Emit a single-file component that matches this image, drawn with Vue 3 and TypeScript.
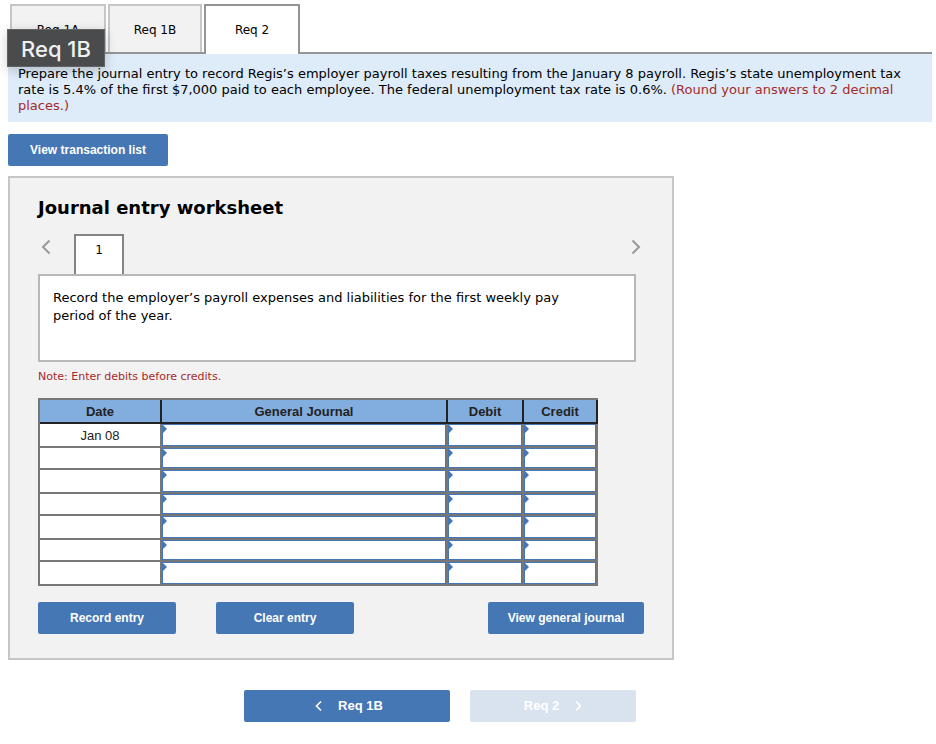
<script setup lang="ts">
import { ref } from 'vue'

interface EntryRow {
  date: string
  account: string
  debit: string
  credit: string
}

const tabs: string[] = ['Req 1A', 'Req 1B', 'Req 2']
const activeTab = ref('Req 2')

const emptyRow = (date = ''): EntryRow => ({ date, account: '', debit: '', credit: '' })
const makeRows = (): EntryRow[] => Array.from({ length: 7 }, (_, i) => emptyRow(i === 0 ? 'Jan 08' : ''))
const rows = ref<EntryRow[]>(makeRows())

function clearEntry(): void {
  rows.value = makeRows()
}
</script>

<template>
  <main class="page">
    <nav class="tabs">
      <button
        v-for="tab in tabs"
        :key="tab"
        type="button"
        class="tab"
        :class="{ active: tab === activeTab }"
        @click="activeTab = tab"
      >{{ tab }}</button>
      <div class="tooltip" role="tooltip">Req 1B</div>
    </nav>

    <p class="instructions">
      Prepare the journal entry to record Regis’s employer payroll taxes resulting from the January 8 payroll. Regis’s state unemployment tax rate is 5.4% of the first $7,000 paid to each employee. The federal unemployment tax rate is 0.6%.
      <span class="warn">(Round your answers to 2 decimal places.)</span>
    </p>

    <button type="button" class="btn list-btn">View transaction list</button>

    <section class="worksheet">
      <h1>Journal entry worksheet</h1>

      <div class="pager">
        <button type="button" class="arrow" aria-label="Previous entry">
          <svg width="10" height="16" viewBox="0 0 10 16"><path d="M8.5 1.5L2 8l6.5 6.5" /></svg>
        </button>
        <button type="button" class="entry-tab">1</button>
        <button type="button" class="arrow next" aria-label="Next entry">
          <svg width="10" height="16" viewBox="0 0 10 16"><path d="M1.5 1.5L8 8l-6.5 6.5" /></svg>
        </button>
      </div>

      <div class="description">
        <p>Record the employer’s payroll expenses and liabilities for the first weekly pay period of the year.</p>
      </div>

      <p class="note">Note: Enter debits before credits.</p>

      <table class="journal">
        <colgroup>
          <col class="c-date" />
          <col />
          <col class="c-debit" />
          <col class="c-credit" />
        </colgroup>
        <thead>
          <tr>
            <th scope="col">Date</th>
            <th scope="col">General Journal</th>
            <th scope="col">Debit</th>
            <th scope="col">Credit</th>
          </tr>
        </thead>
        <tbody>
          <tr v-for="(row, i) in rows" :key="i">
            <td>{{ row.date }}</td>
            <td class="field"><input v-model="row.account" type="text" :aria-label="`Account, line ${i + 1}`" /></td>
            <td class="field"><input v-model="row.debit" type="text" :aria-label="`Debit, line ${i + 1}`" /></td>
            <td class="field"><input v-model="row.credit" type="text" :aria-label="`Credit, line ${i + 1}`" /></td>
          </tr>
        </tbody>
      </table>

      <div class="actions">
        <button type="button" class="btn action">Record entry</button>
        <button type="button" class="btn action" @click="clearEntry">Clear entry</button>
        <button type="button" class="btn general">View general journal</button>
      </div>
    </section>

    <div class="steps">
      <button type="button" class="btn step prev">
        <svg width="7" height="12" viewBox="0 0 7 12"><path d="M6 1.5L1.5 6L6 10.5" /></svg>
        <span>Req 1B</span>
      </button>
      <button type="button" class="btn step following" disabled>
        <span>Req 2</span>
        <svg width="7" height="12" viewBox="0 0 7 12"><path d="M1 1.5L5.5 6L1 10.5" /></svg>
      </button>
    </div>
  </main>
</template>

<style>
body {
  margin: 0;
  background: #fff;
}
</style>

<style scoped>
* {
  box-sizing: border-box;
}

.page {
  padding: 4px 4px 22px 8px;
  font: 13px/16px Verdana, 'DejaVu Sans', sans-serif;
  color: #000;
}

button {
  margin: 0;
  padding: 0;
  font: inherit;
  color: inherit;
  cursor: pointer;
}

svg {
  display: block;
  fill: none;
  stroke: currentColor;
}

.tabs {
  position: relative;
  display: flex;
  gap: 2px;
  height: 50px;
  padding-left: 2px;
  border-bottom: 2px solid #949494;
}

.tab {
  width: 96px;
  height: 48px;
  padding-top: 2px;
  border: 2px solid #c6c6c6;
  border-bottom: 0;
  background: #f2f2f2;
  font-size: 12px;
}

.tab:nth-child(2) {
  width: 94px;
}

.tab.active {
  height: 50px;
  padding-top: 0;
  border-color: #949494;
  background: #fff;
}

.tooltip {
  position: absolute;
  top: 25px;
  left: -1px;
  width: 98px;
  height: 38px;
  border: 1px solid #626364;
  background: #4a4b4d;
  box-shadow: 0 3px 12px rgba(0, 0, 0, 0.2);
  color: #f0f0f0;
  font: 500 22px/38px Inter, sans-serif;
  text-align: center;
}

.instructions {
  margin: 0;
  padding: 12px 10px 8px;
  background: #deebf8;
}

.warn,
.note {
  color: #a52a2a;
}

.btn {
  height: 32px;
  border: 0;
  border-radius: 2px;
  background: #4677b5;
  color: #fff;
  font: bold 12px/16px Arial, 'Liberation Sans', sans-serif;
}

.list-btn {
  display: block;
  width: 160px;
  margin: 12px 0 10px;
}

.worksheet {
  max-width: 666px;
  padding: 18px 28px 24px;
  border: 2px solid #c6c6c6;
  background: #f2f2f2;
}

h1 {
  margin: 0;
  font-size: 18px;
  line-height: 24px;
}

.pager {
  display: flex;
  align-items: flex-start;
  margin-top: 14px;
  padding: 0 3px;
}

.arrow {
  margin-top: 5px;
  border: 0;
  background: none;
  color: #999;
}

.arrow svg {
  stroke-width: 2;
}

.next {
  margin-left: auto;
}

.entry-tab {
  width: 50px;
  height: 40px;
  margin-left: 23px;
  padding-bottom: 10px;
  border: 2px solid #848484;
  border-bottom: 0;
  background: #fff;
  font-size: 12px;
}

.description {
  min-height: 88px;
  margin-right: 8px;
  padding: 13px;
  border: 2px solid #b8b8b8;
  background: #fff;
  line-height: 18px;
}

.description p {
  max-width: 520px;
  margin: 0;
}

.note {
  margin: 7px 0 13px;
  font-size: 11px;
}

.journal {
  width: 100%;
  max-width: 560px;
  table-layout: fixed;
  border: solid #777;
  border-width: 2px 0 0 2px;
  border-collapse: separate;
  border-spacing: 0;
  font: 13px/16px Arial, 'Liberation Sans', sans-serif;
  color: #222;
}

.c-date {
  width: 122px;
}

.c-debit {
  width: 76px;
}

.c-credit {
  width: 74px;
}

th,
td {
  height: 24px;
  padding: 2px 0 0;
  border: solid #777;
  border-width: 0 2px 2px 0;
  background: #fff;
  text-align: center;
}

th {
  border-color: #222;
  background: #82addf;
}

tbody tr:nth-child(even) td {
  height: 22px;
}

.field {
  position: relative;
}

.field input {
  position: absolute;
  inset: 0;
  width: 100%;
  height: 100%;
  padding: 0 8px;
  border: 1px solid #4677b5;
  border-radius: 0;
  background: transparent;
  font: inherit;
}

.field::before {
  content: '';
  position: absolute;
  top: 1px;
  left: 1px;
  border: solid transparent;
  border-width: 4px 0 4px 4px;
  border-left-color: #4677b5;
}

.actions {
  display: flex;
  gap: 40px;
  margin-top: 16px;
}

.action {
  width: 138px;
}

.general {
  width: 156px;
  margin-left: auto;
}

.steps {
  display: flex;
  justify-content: flex-end;
  gap: 20px;
  max-width: 628px;
  margin-top: 30px;
}

.step {
  display: flex;
  align-items: center;
  justify-content: center;
  gap: 16px;
  font-size: 13px;
}

.step svg {
  stroke-width: 1.6;
}

.prev {
  width: 206px;
  padding-left: 4px;
}

.following {
  width: 166px;
  background: #d9e3ef;
  cursor: default;
}
</style>
